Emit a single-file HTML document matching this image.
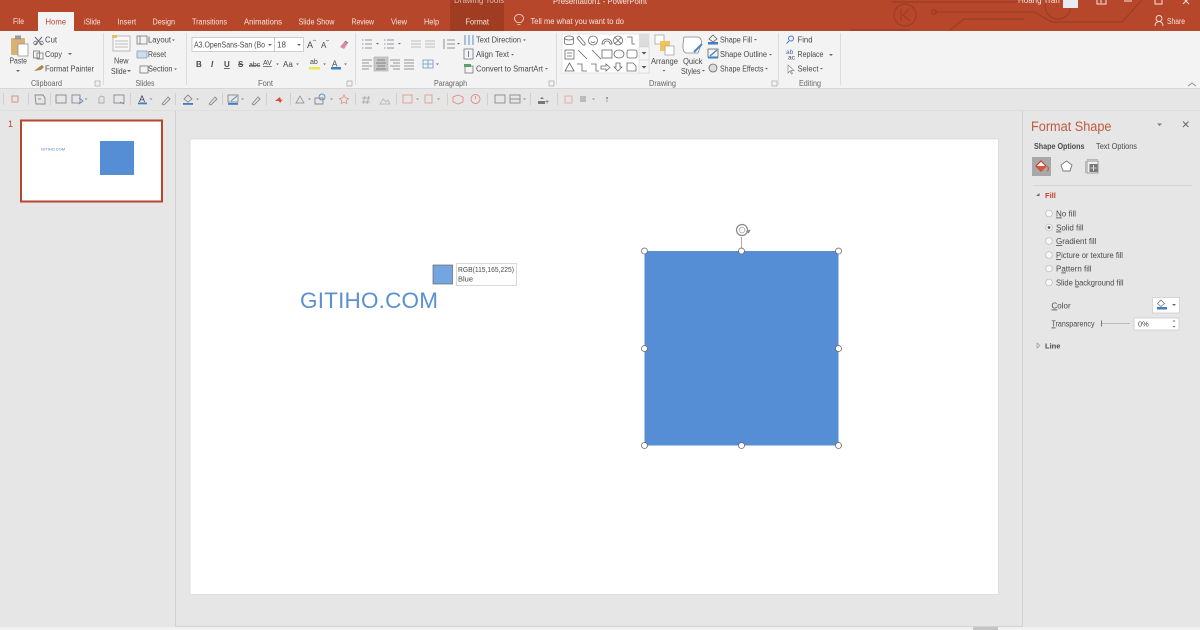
<!DOCTYPE html>
<html><head><meta charset="utf-8"><title>PowerPoint</title>
<style>
html,body{margin:0;padding:0;background:#e6e6e6;overflow:hidden}
svg{display:block;filter:blur(.3px)}
text{font-family:"Liberation Sans",sans-serif;font-size:8px;fill:#4a4a4a}
.w{fill:#f6e4de}
.g{fill:#666}
.i{fill:none;stroke:#777;stroke-width:.8}
.b{fill:none;stroke:#4a86c8;stroke-width:1}
</style></head><body>
<svg width="1200" height="630" viewBox="0 0 1200 630" xmlns="http://www.w3.org/2000/svg">
<rect width="1200" height="630" fill="#e6e6e6"/>
<!-- title bar -->
<rect width="1200" height="31" fill="#b7472a"/>
<rect x="450" y="0" width="54" height="31" fill="#a03c22"/>
<g fill="none" stroke="#9c3d24" stroke-width="1.2">
<circle cx="905" cy="15" r="11"/><path d="M901 9v12M909 9l-6 6 7 6"/>
<path d="M892 2h150M934 12h100l18 10h70l20-22M950 30l14-11h60"/><circle cx="934" cy="12" r="2.5"/>
<circle cx="1058" cy="6" r="13"/><path d="M850 30h60"/>
</g>
<g class="titlebar">
<text class="w" x="454" y="3" font-size="7.5" style="fill:#e2b8aa">Drawing Tools</text>
<text class="w" x="553" y="4" textLength="94" lengthAdjust="spacingAndGlyphs">Presentation1 - PowerPoint</text>
<text class="w" x="1018" y="3">Hoang Tran</text>
<rect x="1063" y="-4" width="15" height="12" fill="#e8ecf2"/>
<path d="M1097 0v4h9v-4M1101 3v-4" stroke="#f6e4de" fill="none"/>
<path d="M1124 1h8" stroke="#f6e4de"/>
<path d="M1155 -1v5h7v-5" stroke="#f6e4de" fill="none"/>
<path d="M1183 -2l6 6M1189 -2l-6 6" stroke="#f6e4de"/>
<text class="w" x="13" y="24" textLength="11" lengthAdjust="spacingAndGlyphs">File</text>
<rect x="38" y="12" width="36" height="19" fill="#f3f3f3"/>
<text x="45.5" y="24.5" style="fill:#b7472a" textLength="20.5" lengthAdjust="spacingAndGlyphs">Home</text>
<text class="w" x="84" y="24.5" textLength="16.5" lengthAdjust="spacingAndGlyphs">iSlide</text>
<text class="w" x="117.5" y="24.5" textLength="18.5" lengthAdjust="spacingAndGlyphs">Insert</text>
<text class="w" x="152.5" y="24.5" textLength="22.5" lengthAdjust="spacingAndGlyphs">Design</text>
<text class="w" x="192" y="24.5" textLength="35" lengthAdjust="spacingAndGlyphs">Transitions</text>
<text class="w" x="244" y="24.5" textLength="38" lengthAdjust="spacingAndGlyphs">Animations</text>
<text class="w" x="298.5" y="24.5" textLength="36" lengthAdjust="spacingAndGlyphs">Slide Show</text>
<text class="w" x="351.5" y="24.5" textLength="22.5" lengthAdjust="spacingAndGlyphs">Review</text>
<text class="w" x="391" y="24.5" textLength="16" lengthAdjust="spacingAndGlyphs">View</text>
<text class="w" x="424" y="24.5" textLength="15" lengthAdjust="spacingAndGlyphs">Help</text>
<text class="w" x="465.5" y="24.5" textLength="23.5" lengthAdjust="spacingAndGlyphs">Format</text>
<path d="M517.5 24.5h3M516 21.5c-3-3-1-7 3-7s6 4 3 7l-1 1h-4z" fill="none" stroke="#f6e4de" stroke-width=".8"/>
<text class="w" x="530.5" y="24" textLength="93.5" lengthAdjust="spacingAndGlyphs">Tell me what you want to do</text>
<circle cx="1159" cy="18.5" r="3" fill="none" stroke="#f6e4de" stroke-width=".9"/><path d="M1155 26c0-6 8-6 8 0" fill="none" stroke="#f6e4de" stroke-width=".9"/>
<text class="w" x="1167" y="24" textLength="18" lengthAdjust="spacingAndGlyphs">Share</text>
</g>
<!-- ribbon -->
<rect y="31" width="1200" height="57" fill="#f3f3f3"/>
<rect y="88" width="1200" height="1" fill="#d6d6d6"/>
<g fill="#dcdcdc"><rect x="103" y="33" width="1" height="52"/><rect x="186" y="33" width="1" height="52"/><rect x="355" y="33" width="1" height="52"/><rect x="556" y="33" width="1" height="52"/><rect x="778" y="33" width="1" height="52"/><rect x="840" y="33" width="1" height="52"/></g>
<!-- clipboard -->
<rect x="11" y="38" width="14" height="17" rx="1" fill="#d8b274"/><rect x="15" y="35.5" width="6" height="4" fill="#9a9a9a"/><rect x="18" y="44" width="10" height="12" fill="#fff" stroke="#888" stroke-width=".7"/>
<text x="9.5" y="63.5" textLength="17.5" lengthAdjust="spacingAndGlyphs">Paste</text><path d="M16 70h4l-2 2z" fill="#666"/>
<path d="M35 37l7 8M42 37l-7 8" stroke="#667" fill="none"/><circle cx="35.5" cy="43" r="1.8" class="i"/><circle cx="41.5" cy="43" r="1.8" class="i"/>
<text x="45" y="42.5" textLength="12" lengthAdjust="spacingAndGlyphs">Cut</text>
<rect x="33.5" y="51" width="6" height="7" class="i"/><rect x="37" y="53" width="6" height="6" class="i" fill="#fff"/><text x="45" y="57" textLength="17" lengthAdjust="spacingAndGlyphs">Copy</text><path d="M68 53h4l-2 2z" fill="#666"/>
<path d="M34 71l5-4 3-2 2 2-3 3z" fill="#a98a4c"/><text x="45" y="71.5" textLength="49" lengthAdjust="spacingAndGlyphs">Format Painter</text>
<text x="31" y="86" class="g" textLength="31" lengthAdjust="spacingAndGlyphs">Clipboard</text>
<!-- slides -->
<rect x="113" y="36" width="17" height="15" fill="#f8f8f8" stroke="#aaa" stroke-width=".8"/><path d="M115 41h13M115 44h13M115 47h13" stroke="#bbb"/><rect x="112" y="35" width="5" height="3" fill="#e8c060"/>
<text x="114" y="63.5" textLength="14.5" lengthAdjust="spacingAndGlyphs">New</text><text x="111" y="74" textLength="15.5" lengthAdjust="spacingAndGlyphs">Slide</text><path d="M127 70h4l-2 2z" fill="#666"/>
<rect x="137" y="36" width="10" height="8" class="i"/><path d="M140 36v8" class="i"/><text x="148" y="42.5" textLength="23" lengthAdjust="spacingAndGlyphs">Layout</text><path d="M172 39.5h3l-1.500 1.500z" fill="#666"/>
<rect x="137" y="51" width="10" height="7" fill="#cfdcec" stroke="#7794b8" stroke-width=".7"/><text x="148" y="57" textLength="18" lengthAdjust="spacingAndGlyphs">Reset</text>
<rect x="140" y="66" width="8" height="7" class="i" stroke="#c68a50"/><text x="148" y="71.5" textLength="24.5" lengthAdjust="spacingAndGlyphs">Section</text><path d="M174 68.5h3l-1.500 1.500z" fill="#666"/>
<text x="135.5" y="86" class="g" textLength="19" lengthAdjust="spacingAndGlyphs">Slides</text>
<!-- font -->
<rect x="192" y="37.5" width="82.5" height="14" fill="#fff" stroke="#bbb" stroke-width=".7"/><rect x="274.5" y="37.5" width="29" height="14" fill="#fff" stroke="#bbb" stroke-width=".7"/>
<text x="194" y="47.5" textLength="71" lengthAdjust="spacingAndGlyphs">A3.OpenSans-San (Bo</text><path d="M268 44h4l-2 2z" fill="#666"/>
<text x="277" y="47.5">18</text><path d="M297 44h4l-2 2z" fill="#666"/>
<text x="307" y="48" style="font-size:9px">A</text><text x="321" y="48" style="font-size:8px">A</text><path d="M313 41l1.500-1 1.500 1M326 40l1.500 1 1.500-1" stroke="#777" fill="none" stroke-width=".7"/>
<path d="M340 47l5-6 3 2-4 6z" fill="#d98aa0"/><path d="M345 41l3 2" stroke="#777"/>
<g style="font-weight:bold"><text x="196" y="67" style="font-weight:bold">B</text><text x="211" y="67" style="font-style:italic">I</text><text x="224" y="67" style="font-weight:bold;text-decoration:underline">U</text><text x="238" y="67" style="font-weight:bold;text-decoration:line-through">S</text></g>
<text x="249" y="67" style="font-size:7px;text-decoration:line-through">abc</text>
<text x="263" y="65" style="font-size:7px;text-decoration:underline">AV</text><path d="M276 63.5h3l-1.500 1.500z" fill="#666"/>
<text x="283" y="67">Aa</text><path d="M296 63.5h3l-1.500 1.500z" fill="#666"/>
<text x="310" y="64" style="font-size:7px">ab</text><rect x="309" y="67" width="11" height="2.5" fill="#e8e84a"/><path d="M323 63.5h3l-1.500 1.500z" fill="#666"/>
<text x="332" y="66.5" style="fill:#445">A</text><rect x="331" y="67" width="10" height="2.5" fill="#3f7fc6"/><path d="M344 63.5h3l-1.500 1.500z" fill="#666"/>
<text x="258" y="86" class="g" textLength="15" lengthAdjust="spacingAndGlyphs">Font</text>
<rect x="347" y="81" width="5" height="5" fill="none" stroke="#999" stroke-width=".6"/><rect x="95" y="81" width="5" height="5" fill="none" stroke="#999" stroke-width=".6"/>
<!-- paragraph -->
<g stroke="#777" fill="none" stroke-width=".8">
<path d="M365 40h7M365 44h7M365 48h7M387 40h7M387 44h7M387 48h7"/>
<path d="M362 40h1.500M362 44h1.500M362 48h1.500M384 40h1.500M384 44h1.500M384 48h1.500" stroke="#4a86c8"/>
<path d="M362 60h10M362 63h7M362 66h10M362 69h7"/>
<path d="M390 60h10M393 63h7M390 66h10M393 69h7M404 60h10M404 63h10M404 66h10M404 69h10"/>
<path d="M411 41h10M411 44h10M411 47h10M425 41h10M425 44h10M425 47h10" stroke="#aaa"/>
<path d="M447 40h8M447 44h8M447 48h8M444 39v10"/>
</g>
<path d="M376 43h3l-1.500 1.500zM398 43h3l-1.500 1.500zM457 43h3l-1.500 1.500z" fill="#666"/>
<rect x="374" y="57" width="14" height="14" fill="#c9c9c9" stroke="#aaa" stroke-width=".6"/><path d="M377 60h8M376 63h10M377 66h8M376 69h10" stroke="#666" stroke-width=".8"/>
<path d="M423 60h10v8h-10zM428 60v8M423 64h10" stroke="#6a96c8" fill="none" stroke-width=".8"/><path d="M436 63.5h3l-1.500 1.500z" fill="#666"/>
<path d="M465 35v10M469 35v10M473 35v10" stroke="#5b8fc4" fill="none"/>
<text x="476" y="42.5" textLength="45" lengthAdjust="spacingAndGlyphs">Text Direction</text><path d="M523 39.5h3l-1.500 1.500z" fill="#666"/>
<rect x="464" y="49" width="9" height="10" class="i"/><path d="M468.5 51v6" stroke="#4a86c8"/><text x="476" y="57" textLength="33" lengthAdjust="spacingAndGlyphs">Align Text</text><path d="M511 54h3l-1.500 1.500z" fill="#666"/>
<rect x="465" y="66" width="8" height="7" class="i"/><rect x="464" y="64" width="7" height="3" fill="#5c9e6e"/><text x="476" y="71.5" textLength="67" lengthAdjust="spacingAndGlyphs">Convert to SmartArt</text><path d="M545 68h3l-1.500 1.500z" fill="#666"/>
<text x="434" y="86" class="g" textLength="33" lengthAdjust="spacingAndGlyphs">Paragraph</text>
<rect x="549" y="81" width="5" height="5" fill="none" stroke="#999" stroke-width=".6"/>
<!-- drawing gallery -->
<rect x="562" y="34" width="87" height="39" fill="#fff" stroke="#ddd" stroke-width=".7"/>
<rect x="639" y="34" width="10" height="13" fill="#dcdcdc"/><rect x="639" y="47" width="10" height="13" fill="#f5f5f5" stroke="#ccc" stroke-width=".5"/><rect x="639" y="60" width="10" height="13" fill="#f5f5f5" stroke="#ccc" stroke-width=".5"/>
<path d="M641.500 52h5l-2.500 2.500zM641.500 66h5l-2.500 2.500z" fill="#555"/>
<g fill="none" stroke="#666" stroke-width=".8">
<ellipse cx="569" cy="38" rx="4.500" ry="2"/><path d="M564.500 38v5c0 2 9 2 9 0v-5"/>
<path d="M579 36l6 7 0 2-2 0-6-7z"/><circle cx="593" cy="40.500" r="4.500"/><path d="M591 41.500c1 1.500 3 1.500 4 0"/>
<path d="M602 44a5 5 0 0 1 10 0h-2a3 3 0 0 0-6 0z"/><circle cx="618" cy="40.500" r="4.500"/><path d="M615 37.500l6 6M621 37.500l-6 6"/>
<path d="M627 37h5v7h3"/>
<rect x="565" y="50" width="9" height="9"/><path d="M567 53h5M567 56h5"/><path d="M578 50l9 9M592 50l9 9"/>
<rect x="602" y="50" width="10" height="8"/><ellipse cx="619" cy="54" rx="5" ry="4"/><rect x="627" y="50" width="10" height="8" rx="2"/>
<path d="M565 71l4.500-8 4.500 8z"/><path d="M577 64h5v7h5M591 64h5v7h3"/>
<path d="M601 66h5v-2l4 3.500-4 3.500v-2h-5zM616 63h4v4h2l-4 4-4-4h2zM627 63h6l3 3v5h-9z"/>
</g>
<rect x="655" y="35" width="9" height="9" fill="#fff" stroke="#999" stroke-width=".7"/><rect x="660" y="41" width="10" height="10" fill="#f0c458"/><rect x="665" y="46" width="9" height="9" fill="#fff" stroke="#999" stroke-width=".7"/>
<text x="651" y="64" textLength="27" lengthAdjust="spacingAndGlyphs">Arrange</text><path d="M662.5 70h3l-1.500 1.500z" fill="#666"/>
<path d="M684 37h14c3 1 4 4 3 8l-3 8h-12c-3-1-3-4-3-8z" fill="#fff" stroke="#888" stroke-width=".8"/><path d="M702 44l-8 8" stroke="#4a86c8" stroke-width="2"/>
<text x="683" y="64" textLength="19.5" lengthAdjust="spacingAndGlyphs">Quick</text><text x="681" y="74" textLength="19.5" lengthAdjust="spacingAndGlyphs">Styles</text><path d="M702 70h3l-1.500 1.500z" fill="#666"/>
<path d="M713 35l4 4-4 3-4-3z" fill="none" stroke="#666" stroke-width=".8"/><rect x="708" y="42" width="10" height="2.5" fill="#3f7fc6"/><text x="720" y="42.5" textLength="32" lengthAdjust="spacingAndGlyphs">Shape Fill</text><path d="M754 39h3l-1.500 1.500z" fill="#666"/>
<rect x="708" y="49" width="10" height="8" fill="none" stroke="#666" stroke-width=".8"/><path d="M710 56l7-6" stroke="#3f7fc6" stroke-width="1.2"/><rect x="708" y="56.5" width="10" height="2" fill="#3f7fc6"/><text x="720" y="57" textLength="47" lengthAdjust="spacingAndGlyphs">Shape Outline</text><path d="M769 54h3l-1.500 1.500z" fill="#666"/>
<circle cx="713" cy="68" r="4" fill="#ddd" stroke="#666" stroke-width=".8"/><text x="720" y="71.5" textLength="43.5" lengthAdjust="spacingAndGlyphs">Shape Effects</text><path d="M765 68h3l-1.500 1.500z" fill="#666"/>
<text x="649" y="86" class="g" textLength="27" lengthAdjust="spacingAndGlyphs">Drawing</text>
<rect x="772" y="81" width="5" height="5" fill="none" stroke="#999" stroke-width=".6"/>
<!-- editing -->
<circle cx="791" cy="38.5" r="2.5" fill="none" stroke="#3f7fc6"/><path d="M789 41l-2.500 2.500" stroke="#3f7fc6"/><text x="797.5" y="42.5" textLength="15" lengthAdjust="spacingAndGlyphs">Find</text>
<text x="786" y="54" style="font-size:6.5px;fill:#3f6fa8">ab</text><text x="788" y="59.5" style="font-size:6.5px">ac</text><text x="797.5" y="57" textLength="26" lengthAdjust="spacingAndGlyphs">Replace</text><path d="M829 54h4l-2 2z" fill="#666"/>
<path d="M788 65v8l2-2 1.500 3 1-.5-1.500-3h3z" fill="#fff" stroke="#888" stroke-width=".7"/><text x="797.5" y="71.5" textLength="21" lengthAdjust="spacingAndGlyphs">Select</text><path d="M820 68h3l-1.500 1.500z" fill="#666"/>
<text x="799" y="86" class="g" textLength="22" lengthAdjust="spacingAndGlyphs">Editing</text>
<path d="M1188 86l4-3 4 3" stroke="#888" fill="none" stroke-width=".8"/>
<!-- quick toolbar -->
<g fill="none" stroke-width=".9" stroke="#888">
<rect x="12" y="96" width="6" height="6" stroke="#d88a80"/>
<path d="M35 95h8l2 3v6h-9z"/><path d="M38 99h3"/>
<rect x="56" y="95" width="10" height="8"/><rect x="72" y="95" width="8" height="8"/><path d="M79 98l4 3-4 3"  stroke="#5b8fc4"/>
<path d="M99 103v-5l2-2 3 1v6z" stroke="#aaa"/>
<rect x="114" y="95" width="10" height="8"/><path d="M120 102l4 2" stroke="#5b8fc4"/>
<path d="M162 104l6-7 2 2-6 6z"/><path d="M209 104l6-7 2 2-6 6z"/><path d="M252 104l6-7 2 2-6 6z"/>
<path d="M184 99l4-4 4 4-4 3z"/>
<rect x="228" y="95" width="10" height="7"/><path d="M231 101l6-5" stroke="#5b8fc4"/>
<path d="M296 103l4-7 4 7z" stroke="#999"/><path d="M315 98h8v6h-8z"/><circle cx="322" cy="97" r="3" stroke="#5b8fc4"/>
<path d="M344 95l1.500 3 3 .4-2.200 2.200.5 3-2.800-1.500-2.800 1.500.5-3-2.200-2.200 3-.4z" stroke="#e09a90"/>
<path d="M365 96l-2 8M369 96l-2 8M362 98h8M362 102h8" stroke="#aaa"/>
<path d="M380 104l3-5 3 3 2-2 2 4z" stroke="#bbb"/>
<rect x="403" y="95" width="9" height="8" stroke="#e09a90"/><rect x="425" y="95" width="7" height="8" stroke="#e09a90"/>
<path d="M453 97l5-2 5 2v5l-5 2-5-2z" stroke="#e08a80"/>
<circle cx="475.5" cy="99" r="4.5" stroke="#e08a80"/><path d="M475.5 96v3" stroke="#e08a80"/>
<rect x="495" y="95" width="10" height="8"/><rect x="510" y="95" width="10" height="8"/><path d="M510 99h10"/>
<rect x="565" y="96" width="7" height="7" stroke="#e8a8a0"/>
</g>
<text x="139" y="102" style="fill:#445;font-size:9px">A</text><rect x="138" y="102.5" width="9" height="1.8" fill="#3f7fc6"/>
<rect x="183" y="103" width="10" height="1.8" fill="#3f7fc6"/><rect x="228" y="103" width="10" height="1.8" fill="#3f7fc6"/>
<path d="M275 101l5-4 1 3 2-1-3 4-1-2z" fill="#d9483a"/>
<path d="M538 101h7v3h-7zM540 99l2-2 2 2" fill="#777"/><text x="545" y="104" style="font-size:7px">+</text>
<rect x="580" y="96" width="6" height="6" fill="#bbb"/>
<path d="M606 97h2v2h-2zM605.500 100.500h3l-1.500 1.500z" fill="#999"/>
<g fill="#888"><path d="M84.500 98.500h3l-1.500 1.500zM149.500 98.500h3l-1.500 1.500zM196 98.500h3l-1.500 1.500zM241 98.500h3l-1.500 1.500zM308 98.500h3l-1.500 1.500zM330 98.500h3l-1.500 1.500zM416 98.500h3l-1.500 1.500zM437 98.500h3l-1.500 1.500zM523 98.500h3l-1.500 1.500zM592 98.500h3l-1.500 1.500z"/></g>
<g fill="#d0d0d0"><rect x="3" y="93" width="1" height="12"/><rect x="28" y="93" width="1" height="12"/><rect x="50" y="93" width="1" height="12"/><rect x="130" y="93" width="1" height="12"/><rect x="175" y="93" width="1" height="12"/><rect x="222" y="93" width="1" height="12"/><rect x="266" y="93" width="1" height="12"/><rect x="290" y="93" width="1" height="12"/><rect x="355" y="93" width="1" height="12"/><rect x="396" y="93" width="1" height="12"/><rect x="447" y="93" width="1" height="12"/><rect x="487" y="93" width="1" height="12"/><rect x="530" y="93" width="1" height="12"/><rect x="557" y="93" width="1" height="12"/></g>
<!-- panels -->
<rect x="0" y="110" width="1200" height="1" fill="#dedede"/>
<rect x="175" y="111" width="1" height="516" fill="#d2d2d2"/>
<rect x="1022" y="111" width="1" height="516" fill="#d2d2d2"/>
<rect x="176" y="626" width="846" height="1" fill="#d2d2d2"/>
<rect x="0" y="627" width="1200" height="3" fill="#f1f1f1"/>
<rect x="973" y="627" width="25" height="3" fill="#c4c4c4"/>
<!-- thumb -->
<text x="8" y="127" style="font-size:9px;fill:#b7472a">1</text>
<rect x="21" y="120.5" width="141" height="81" fill="#fff" stroke="#b7472a" stroke-width="2"/>
<text x="41" y="150.5" style="font-size:3.6px;fill:#4a7fc0" textLength="24" lengthAdjust="spacingAndGlyphs">GITIHO.COM</text>
<rect x="100" y="141" width="34" height="34" fill="#558ed5"/>
<!-- slide -->
<rect x="190" y="139" width="808.5" height="455.5" fill="#fff" stroke="#d6d6d6" stroke-width=".7"/>
<text x="300" y="308" style="font-size:22.5px;fill:#5b90d2" textLength="138">GITIHO.COM</text>
<rect x="433" y="265" width="19.5" height="19" fill="#73a5e1" stroke="#666" stroke-width=".7"/>
<rect x="456.5" y="263.5" width="60" height="22" fill="#fff" stroke="#d0d0d0" stroke-width=".8"/>
<text x="458" y="272" style="font-size:7.5px" textLength="56" lengthAdjust="spacingAndGlyphs">RGB(115,165,225)</text>
<text x="458" y="281.5" style="font-size:7.5px">Blue</text>
<!-- shape -->
<rect x="644.5" y="251" width="194" height="194.5" fill="#558ed5"/>
<path d="M741.5 251v-14" stroke="#999" stroke-width=".8"/>
<circle cx="742" cy="230" r="5.5" fill="none" stroke="#888" stroke-width="1.2"/><circle cx="742" cy="230" r="2.8" fill="none" stroke="#aaa" stroke-width=".8"/><path d="M746 231l5-1.500-2.500 4z" fill="#888"/>
<g fill="#fff" stroke="#6a6a6a" stroke-width=".8">
<circle cx="644.5" cy="251" r="3"/><circle cx="741.5" cy="251" r="3"/><circle cx="838.5" cy="251" r="3"/><circle cx="644.5" cy="348.5" r="3"/><circle cx="838.5" cy="348.5" r="3"/><circle cx="644.5" cy="445.5" r="3"/><circle cx="741.5" cy="445.5" r="3"/><circle cx="838.5" cy="445.5" r="3"/>
</g>
<!-- format shape pane -->
<text x="1031" y="131" style="font-size:13.5px;fill:#bf5a40" textLength="80.5" lengthAdjust="spacingAndGlyphs">Format Shape</text>
<path d="M1157 123.5h5l-2.500 2.500z" fill="#777"/><path d="M1183 121.5l5.500 5.500M1188.500 121.500l-5.500 5.500" stroke="#666" stroke-width="1"/>
<text x="1034" y="149" style="font-weight:bold;font-size:7.8px" textLength="50.5" lengthAdjust="spacingAndGlyphs">Shape Options</text>
<text x="1096" y="149" textLength="41" lengthAdjust="spacingAndGlyphs">Text Options</text>
<rect x="1032" y="157" width="19" height="19" fill="#a8a8a8"/>
<path d="M1041 161l5 5-5 5-5-5z" fill="#fff" stroke="#c8402a" stroke-width="1.2"/><path d="M1036 166h10l-5 5z" fill="#d9543a"/><path d="M1047 166c2 2 2 4 0 5" stroke="#d9543a" fill="none"/>
<path d="M1066.5 161l5.500 4-2 6h-7l-2-6z" fill="#fff" stroke="#777" stroke-width=".9"/>
<rect x="1087" y="161" width="11" height="12" fill="#eee" stroke="#777" stroke-width=".7"/><rect x="1089.5" y="164" width="8" height="8" fill="#777"/><path d="M1093.500 165v6M1090.500 168h6" stroke="#eee" stroke-width=".8"/><path d="M1087 159.500h11M1085.500 161v12" stroke="#888" stroke-width=".5"/>
<path d="M1033 185.500h159" stroke="#cfcfcf" stroke-width=".8"/>
<path d="M1036 196l3.500-3v3z" fill="#666"/><text x="1045" y="198" style="font-weight:bold;font-size:7.5px;fill:#c8402a">Fill</text>
<g fill="#f7f7f7" stroke="#bbb" stroke-width=".7">
<circle cx="1049" cy="213.5" r="3.3"/><circle cx="1049" cy="227.5" r="3.3"/><circle cx="1049" cy="241" r="3.3"/><circle cx="1049" cy="255" r="3.3"/><circle cx="1049" cy="268.5" r="3.3"/><circle cx="1049" cy="282.5" r="3.3"/>
</g>
<circle cx="1049" cy="227.5" r="1.4" fill="#555"/>
<text x="1056" y="216.5"><tspan text-decoration="underline">N</tspan>o fill</text>
<text x="1056" y="230.5"><tspan text-decoration="underline">S</tspan>olid fill</text>
<text x="1056" y="244"><tspan text-decoration="underline">G</tspan>radient fill</text>
<text x="1056" y="258" textLength="67" lengthAdjust="spacingAndGlyphs"><tspan text-decoration="underline">P</tspan>icture or texture fill</text>
<text x="1056" y="271.5">P<tspan text-decoration="underline">a</tspan>ttern fill</text>
<text x="1056" y="285.5" textLength="67.5" lengthAdjust="spacingAndGlyphs">Slide <tspan text-decoration="underline">b</tspan>ackground fill</text>
<text x="1051.5" y="308.5"><tspan text-decoration="underline">C</tspan>olor</text>
<rect x="1152.5" y="297.5" width="27" height="15.5" fill="#fff" stroke="#ccc" stroke-width=".8"/>
<path d="M1161 300l3.500 3.500-3.500 3-3.500-3z" fill="none" stroke="#777" stroke-width=".8"/><rect x="1157" y="307" width="10" height="2.5" fill="#3f7fc6"/><path d="M1172 304h4l-2 2z" fill="#666"/>
<text x="1051.5" y="326.5" textLength="43" lengthAdjust="spacingAndGlyphs"><tspan text-decoration="underline">T</tspan>ransparency</text>
<path d="M1101.5 320.500v6" stroke="#777"/><path d="M1102 323.500h28" stroke="#bbb"/>
<rect x="1134" y="318" width="45" height="12" fill="#fff" stroke="#ccc" stroke-width=".8"/>
<text x="1138" y="326.5" style="font-size:7.5px">0%</text>
<path d="M1172.500 321.500h3l-1.500-1.500zM1172.500 326h3l-1.500 1.500z" fill="#666"/>
<path d="M1037 343l3 2.500-3 2.500z" fill="none" stroke="#999" stroke-width=".7"/>
<text x="1045" y="348.5" style="font-weight:bold;font-size:7.5px">Line</text>
</svg>
</body></html>
